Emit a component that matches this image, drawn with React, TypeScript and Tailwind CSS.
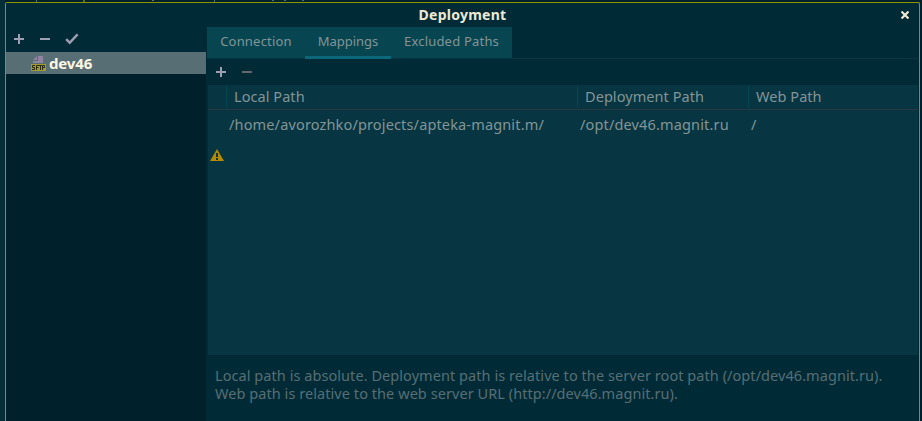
import React from 'react';

const columns = [
  { label: 'Local Path', className: 'w-[351px]' },
  { label: 'Deployment Path', className: 'w-[171px]' },
  { label: 'Web Path', className: 'grow' },
];

function Plus({ color }: { color: string }) {
  return (
    <svg width="10" height="10" viewBox="0 0 10 10" fill={color} shapeRendering="crispEdges">
      <path d="M4 0h2v4h4v2H6v4H4V6H0V4h4z" />
    </svg>
  );
}

function Minus({ color }: { color: string }) {
  return (
    <svg width="10" height="10" viewBox="0 0 10 10" fill={color} shapeRendering="crispEdges">
      <path d="M0 4h10v2H0z" />
    </svg>
  );
}

function Check() {
  return (
    <svg className="-ml-[1px]" width="14" height="12" viewBox="0 0 14 12" fill="none" stroke="#9e9eb4" strokeWidth="2.4">
      <path d="M1.200 6.200l3.500 3.600L12.600 1.400" />
    </svg>
  );
}

function SftpIcon() {
  return (
    <svg width="16" height="16" viewBox="0 0 16 16">
      <path d="M7 1h5v7H2V6h5z" fill="#9083a0" />
      <path d="M6 1v4H2z" fill="#9083a0" />
      <rect y="9" width="15" height="7" fill="#a39c2c" />
      <path
        d="M4 10.500H1.500v2H3.500v2H1M5.500 15V10.500H8M5.500 12.500H7.500M8 10.500h3M9.500 10.500V15M11.500 15V10.500h2v2h-2"
        fill="none"
        stroke="#1c1d12"
        strokeWidth="0.9"
      />
    </svg>
  );
}

function Warning() {
  return (
    <svg width="14" height="12" viewBox="0 0 14 12">
      <path d="M7 0l7 12H0z" fill="#b58900" />
      <path d="M6 4h2v4H6zM6 9h2v2H6z" fill="#073642" />
    </svg>
  );
}

export default function App() {
  return (
    <div className="flex h-[421px] w-[922px] flex-col overflow-hidden border-l-[5px] border-[#052e39] bg-[#00212b] font-['Noto_Sans',sans-serif] text-[14.5px] text-[#839496]">
      <div className="flex h-[2px] shrink-0 pl-[31px]">
        <i className="h-[2px] w-[1px] bg-[#586e75]" />
        <i className="ml-[46px] h-[2px] w-[2px] bg-[#566b12]" />
        <i className="ml-[67px] h-[1px] w-[2px] bg-[#7a6a5a]" />
        <i className="ml-[60px] h-[2px] w-[1px] bg-[#586e75]" />
        <i className="ml-[57px] h-[1px] w-[2px] bg-[#586e75]" />
        <i className="ml-[10px] h-[1px] w-[2px] bg-[#586e75]" />
        <i className="ml-[16px] h-[1px] w-[2px] bg-[#586e75]" />
      </div>
      <div className="flex h-[419px] w-[915px] flex-col rounded-t-[2px] border-x border-t border-[#859900] bg-[#002b36]">
        <div className="flex h-6 shrink-0 items-center">
          <div className="grow pb-[2px] text-center text-[14px] font-bold tracking-[0.25px] text-[#eee8d5]">Deployment</div>
          <svg className="mr-[10px] -ml-[18px]" width="8" height="8" viewBox="0 0 8 8" stroke="#eee8d5" strokeWidth="2.2">
            <path d="M0.500 0.500l7 7M7.500 0.500l-7 7" />
          </svg>
        </div>
        <div className="flex min-h-0 grow">
          <aside className="flex w-[200px] shrink-0 flex-col bg-[#00212b]">
            <div className="flex h-[25px] items-center gap-4 bg-[#002b36] pb-[2px] pl-2">
              <Plus color="#9e9eb4" />
              <Minus color="#9e9eb4" />
              <Check />
            </div>
            <div className="flex h-[22px] items-center bg-[#586e75] pl-[25px]">
              <SftpIcon />
              <span className="ml-[2px] text-[15px] font-bold tracking-[-0.15px] text-[#fdf6e3]">dev46</span>
            </div>
          </aside>
          <main className="flex min-w-0 grow flex-col pl-[1px]">
            <nav className="flex h-8 shrink-0 border-b border-[#073642] text-[13px]">
              <div className="flex h-[31px] w-[98px] items-center justify-center bg-[#074651] pb-[2px] tracking-[0.2px]">Connection</div>
              <div className="flex h-8 w-[86px] items-center justify-center border-b-[3px] border-[#0b6779] bg-[#074651]">Mappings</div>
              <div className="flex h-[31px] w-[121px] items-center justify-center bg-[#074651] pb-[2px] tracking-[0.2px]">Excluded Paths</div>
            </nav>
            <div className="flex h-[26px] shrink-0 items-center gap-4 pl-[9px]">
              <Plus color="#9e9eb4" />
              <Minus color="#66686c" />
            </div>
            <section className="ml-[1px] h-[270px] w-[710px] shrink-0 bg-[#073642]">
              <div className="flex h-[25px] items-start border-b border-[#2c3744] pt-[1px] pl-[18px] tracking-[0.06px]">
                {columns.map((c) => (
                  <div key={c.label} className={`flex h-[22px] items-center border-l border-[#074651] pl-[7px] ${c.className}`}>
                    {c.label}
                  </div>
                ))}
              </div>
              <div className="flex h-[30px] items-center pl-[21px] tracking-[0.15px]">
                <span className="w-[351px]">/home/avorozhko/projects/apteka-magnit.m/</span>
                <span className="w-[171px]">/opt/dev46.magnit.ru</span>
                <span>/</span>
              </div>
              <div className="pt-[9px] pl-[2px]"><Warning /></div>
            </section>
            <footer className="pt-[11px] pl-2 leading-[18px] tracking-[0.06px] whitespace-nowrap text-[#586e75]">
              <p>Local path is absolute. Deployment path is relative to the server root path (/opt/dev46.magnit.ru).</p>
              <p>Web path is relative to the web server URL (http://dev46.magnit.ru).</p>
            </footer>
          </main>
        </div>
      </div>
    </div>
  );
}
